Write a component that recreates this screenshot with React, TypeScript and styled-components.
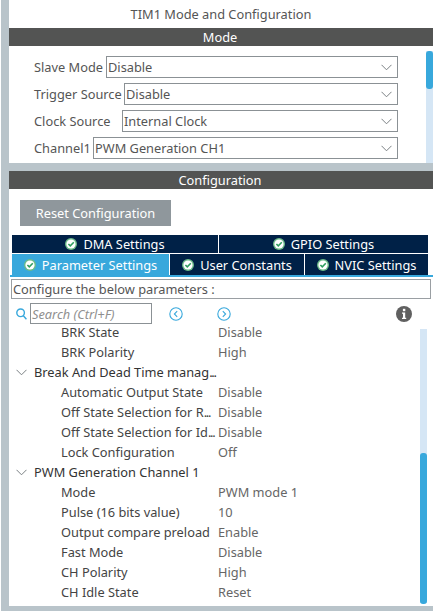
import React from "react";
import styled, { createGlobalStyle } from "styled-components";

const Global = createGlobalStyle`
  html, body { margin: 0; padding: 0; background: #fff; }
  body { font-family: "Noto Sans", "Open Sans", sans-serif; font-size: 12.8px; color: #555; }
`;
const Page = styled.div`
  width: 433px; height: 613px; overflow: hidden; background: #fff;
`;
const Frame = styled.div`
  margin-left: 1px; width: 432px; height: 611px; background: #b9c4ca;
  padding-left: 8px; box-sizing: border-box; display: flex; flex-direction: column;
`;
const Title = styled.div`
  height: 28px; flex: none; background: #fff; display: flex; align-items: center; justify-content: center;
  padding-bottom: 1px; box-sizing: border-box; color: #555;
`;
const Header = styled.div`
  height: 18px; flex: none; background: #535453; color: #fff; display: flex; align-items: center; justify-content: center;
  padding-right: 2px; box-sizing: border-box;
`;
const ModePanel = styled.div`
  height: 117px; flex: none; background: #fff; display: flex; margin-bottom: 8px;
`;
const ModeFields = styled.div`
  flex: 1; padding: 10px 0 0 25px; display: flex; flex-direction: column; gap: 5px;
`;
const Field = styled.div`
  display: flex; align-items: center; height: 22px; width: 364px;
`;
const FieldLabel = styled.span<{ $w: number }>`
  width: ${(p) => p.$w}px; flex: none; white-space: nowrap;
`;
const Select = styled.div`
  flex: 1; height: 22px; box-sizing: border-box; border: 1px solid #8b9195; display: flex; align-items: center;
  justify-content: space-between; padding: 0 5px 0 1px; color: #555;
`;
const Track = styled.div<{ $w: number; $thumbTop: number; $thumbH: number; $mt: number; $mb: number }>`
  width: ${(p) => p.$w}px; flex: none; margin: ${(p) => p.$mt}px 0 ${(p) => p.$mb}px; background: #d5e6f5;
  &::before {
    content: ""; display: block; height: ${(p) => p.$thumbH}px; margin-top: 0; position: relative; top: ${(p) => p.$thumbTop}px;
    background: #38a8dc; border-radius: 3px;
  }
`;
const ConfigPanel = styled.div`
  flex: 1; background: #fff; display: flex; flex-direction: column; min-height: 0; margin-bottom: 5px;
`;
const ResetRow = styled.div`
  padding: 11px 0 9px 11px; flex: none;
`;
const ResetButton = styled.button`
  display: flex; align-items: center; justify-content: center; width: 151px; height: 26px; background: #8f979c; color: #fff;
  border: 0; padding: 0; font: inherit;
`;
const TabRow = styled.div<{ $cols: string; $h: number }>`
  display: grid; grid-template-columns: ${(p) => p.$cols}; column-gap: 1px; height: ${(p) => p.$h}px; margin: 0 0 1px 3px; width: 416px;
`;
const Tab = styled.div<{ $active?: boolean }>`
  background: ${(p) => (p.$active ? "#38a8dc" : "#002147")}; color: #fff; display: flex; align-items: center; justify-content: center; gap: 6px;
  white-space: nowrap;
`;
const Underline = styled.div`
  height: 2px; background: #38a8dc; margin: -1px 0 2px 1px; flex: none;
`;
const Configure = styled.div`
  height: 20px; box-sizing: border-box; margin: 0 2px 0 2px; border: 1px solid #9a9fa3; display: flex; align-items: center; padding-left: 1px; flex: none;
`;
const SearchBar = styled.div`
  display: flex; align-items: center; height: 21px; margin-top: 4px; padding-left: 7px; flex: none;
`;
const SearchBox = styled.div`
  width: 122px; height: 21px; margin-left: 3px; box-sizing: border-box; border: 1px solid #8b9195; color: #8f8f8f; font-style: italic;
  display: flex; align-items: center; padding-left: 1px;
`;
const NavButton = styled.span<{ $ml: number }>`
  display: flex; margin-left: ${(p) => p.$ml}px;
`;
const InfoButton = styled.span`
  display: flex; margin-left: 165px;
`;
const TreeArea = styled.div`
  flex: 1; display: flex; min-height: 0; padding: 0 6px 0 0;
`;
const Tree = styled.div`
  flex: 1; display: flex; flex-direction: column; margin-top: -2px;
`;
const Row = styled.div`
  height: 20px; flex: none; display: grid; grid-template-columns: 157px 1fr; padding-left: 52px; align-items: center; white-space: nowrap;
`;
const RowLabel = styled.span`
  color: #444;
`;
const RowValue = styled.span`
  color: #666;
`;
const Group = styled.div`
  height: 20px; flex: none; display: flex; align-items: center; padding-left: 7px; gap: 7px; color: #333; white-space: nowrap;
`;
const Dots = styled.span`
  letter-spacing: -1.3px;
`;

const Chevron = ({ w = 11 }: { w?: number }) => (
  <svg width={w} height="7" viewBox="0 0 11 7" fill="none" stroke="#7b8084" strokeWidth="1">
    <path d="M0.5 0.8 L5.5 5.8 L10.5 0.8" />
  </svg>
);
const Check = () => (
  <svg width="12" height="12" viewBox="0 0 12 12" style={{ flex: "none" }}>
    <circle cx="6" cy="6" r="6" fill="#6dbb8a" />
    <circle cx="6" cy="6" r="4.6" fill="#fff" />
    <path d="M3.4 6 L5.3 7.9 L8.8 4.3" fill="none" stroke="#2f9e5f" strokeWidth="1.6" />
  </svg>
);
const Nav = ({ dir }: { dir: "l" | "r" }) => (
  <svg width="14" height="14" viewBox="0 0 14 14" fill="none" stroke="#38a8dc" strokeWidth="1.1">
    <circle cx="7" cy="7" r="6.2" />
    <path d={dir === "l" ? "M8.2 4.2 L5.4 7 L8.2 9.8" : "M5.8 4.2 L8.6 7 L5.8 9.8"} />
  </svg>
);
const Info = () => (
  <svg width="16" height="16" viewBox="0 0 16 16">
    <circle cx="8" cy="8" r="8" fill="#606060" />
    <rect x="6.9" y="2.8" width="2.4" height="2.4" fill="#fff" />
    <path d="M6 6.6 H9.2 V11.8 H10.2 V13 H6 V11.8 H7 V7.8 H6 Z" fill="#fff" />
  </svg>
);
const SearchIcon = () => (
  <svg width="11" height="12" viewBox="0 0 11 12" fill="none" stroke="#38a8dc" strokeWidth="1.4">
    <circle cx="4.6" cy="4.8" r="3.8" />
    <path d="M7.4 7.8 L10.4 11.2" />
  </svg>
);

const modes = [
  { label: "Slave Mode", w: 72, value: "Disable" },
  { label: "Trigger Source", w: 90, value: "Disable" },
  { label: "Clock Source", w: 88, value: "Internal Clock" },
  { label: "Channel1", w: 59, value: "PWM Generation CH1" },
];
type Item = { g?: React.ReactNode; l?: React.ReactNode; v?: string };
const items: Item[] = [
  { l: "BRK State", v: "Disable" },
  { l: "BRK Polarity", v: "High" },
  { g: <span>Break And Dead Time manag<Dots>...</Dots></span> },
  { l: "Automatic Output State", v: "Disable" },
  { l: <>Off State Selection for R<Dots>...</Dots></>, v: "Disable" },
  { l: <>Off State Selection for Id<Dots>...</Dots></>, v: "Disable" },
  { l: "Lock Configuration", v: "Off" },
  { g: "PWM Generation Channel 1" },
  { l: "Mode", v: "PWM mode 1" },
  { l: "Pulse (16 bits value)", v: "10" },
  { l: "Output compare preload", v: "Enable" },
  { l: "Fast Mode", v: "Disable" },
  { l: "CH Polarity", v: "High" },
  { l: "CH Idle State", v: "Reset" },
];

export default function App() {
  return (
    <Page>
      <Global />
      <Frame>
        <Title>TIM1 Mode and Configuration</Title>
        <Header>Mode</Header>
        <ModePanel>
          <ModeFields>
            {modes.map((m) => (
              <Field key={m.label}>
                <FieldLabel $w={m.w}>{m.label}</FieldLabel>
                <Select>
                  {m.value}
                  <Chevron />
                </Select>
              </Field>
            ))}
          </ModeFields>
          <Track $w={7} $mt={5} $mb={0} $thumbTop={0} $thumbH={38} />
        </ModePanel>
        <Header>Configuration</Header>
        <ConfigPanel>
          <ResetRow>
            <ResetButton>Reset Configuration</ResetButton>
          </ResetRow>
          <TabRow $cols="206px 209px" $h={18}>
            <Tab><Check />DMA Settings</Tab>
            <Tab><Check />GPIO Settings</Tab>
          </TabRow>
          <TabRow $cols="157px 134px 123px" $h={21}>
            <Tab $active><Check />Parameter Settings</Tab>
            <Tab><Check />User Constants</Tab>
            <Tab><Check />NVIC Settings</Tab>
          </TabRow>
          <Underline />
          <Configure>Configure the below parameters :</Configure>
          <SearchBar>
            <SearchIcon />
            <SearchBox>Search (Ctrl+F)</SearchBox>
            <NavButton $ml={17}><Nav dir="l" /></NavButton>
            <NavButton $ml={34}><Nav dir="r" /></NavButton>
            <InfoButton><Info /></InfoButton>
          </SearchBar>
          <TreeArea>
            <Tree>
              {items.map((it, i) =>
                it.g ? (
                  <Group key={i}>
                    <Chevron />
                    {it.g}
                  </Group>
                ) : (
                  <Row key={i}>
                    <RowLabel>{it.l}</RowLabel>
                    <RowValue>{it.v}</RowValue>
                  </Row>
                )
              )}
            </Tree>
            <Track $w={7} $mt={5} $mb={3} $thumbTop={124} $thumbH={151} />
          </TreeArea>
        </ConfigPanel>
      </Frame>
    </Page>
  );
}
